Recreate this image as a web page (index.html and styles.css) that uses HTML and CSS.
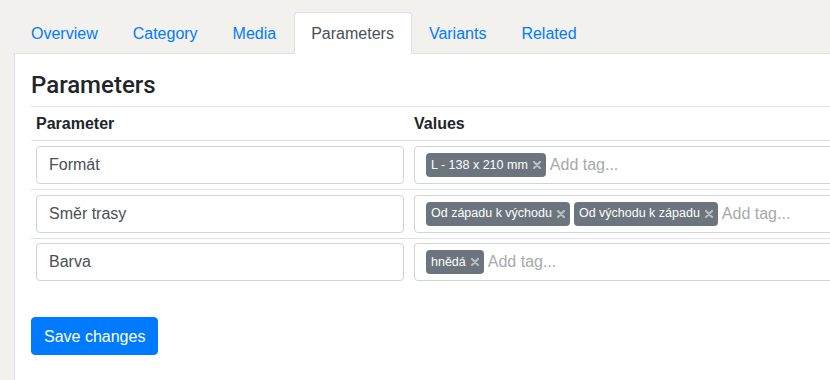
FILE: index.html
```html
<!DOCTYPE html>
<html lang="cs">
<head>
  <meta charset="UTF-8" />
  <meta name="viewport" content="width=device-width, initial-scale=1" />
  <title>Product parameters</title>
  <link rel="stylesheet" href="styles.css">
</head>
<body>

  <div class="page">
    <ul class="tabs">
      <li><a href="#">Overview</a></li>
      <li><a href="#">Category</a></li>
      <li><a href="#">Media</a></li>
      <li><a href="#" class="active">Parameters</a></li>
      <li><a href="#">Variants</a></li>
      <li><a href="#">Related</a></li>
    </ul>

    <div class="panel">
      <h4 class="panel-title">Parameters</h4>

      <table class="params">
        <thead>
          <tr>
            <th class="col-name">Parameter</th>
            <th>Values</th>
          </tr>
        </thead>
        <tbody>
          <tr>
            <td><input type="text" class="form-control" value="Formát"></td>
            <td>
              <div class="tag-input">
                <span class="tag">L - 138 x 210 mm <svg class="tag-remove" viewBox="0 0 8 8"><path d="M1 1L7 7M7 1L1 7"/></svg></span>
                <input type="text" class="tag-new" placeholder="Add tag...">
              </div>
            </td>
          </tr>
          <tr>
            <td><input type="text" class="form-control" value="Směr trasy"></td>
            <td>
              <div class="tag-input">
                <span class="tag">Od západu k východu <svg class="tag-remove" viewBox="0 0 8 8"><path d="M1 1L7 7M7 1L1 7"/></svg></span>
                <span class="tag">Od východu k západu <svg class="tag-remove" viewBox="0 0 8 8"><path d="M1 1L7 7M7 1L1 7"/></svg></span>
                <input type="text" class="tag-new" placeholder="Add tag...">
              </div>
            </td>
          </tr>
          <tr>
            <td><input type="text" class="form-control" value="Barva"></td>
            <td>
              <div class="tag-input">
                <span class="tag">hnědá <svg class="tag-remove" viewBox="0 0 8 8"><path d="M1 1L7 7M7 1L1 7"/></svg></span>
                <input type="text" class="tag-new" placeholder="Add tag...">
              </div>
            </td>
          </tr>
        </tbody>
      </table>

      <div class="actions">
        <button type="button" class="btn-save">Save changes</button>
      </div>
    </div>
  </div>

</body>
</html>
```

FILE: styles.css
```css
:root {
  --primary: #007bff;
  --border: #dee2e6;
  --input-border: #ced4da;
  --text: #212529;
  --text-muted: #495057;
  --badge: #6c757d;
  --bg-page: #f2f1ee;
}

html, body {
  height: 100%;
}

body {
  margin: 0;
  background-color: var(--bg-page);
  color: var(--text);
  font-family: "Liberation Sans", Arial, sans-serif;
  font-size: 16px;
  line-height: 1.5;
  overflow: hidden;
}

.page {
  width: 1100px;
  min-height: 100%;
  padding: 12px 0 0 14px;
  display: flex;
  flex-direction: column;
  box-sizing: border-box;
}

.tabs {
  display: flex;
  list-style: none;
  margin: 0;
  padding: 0;
  border-bottom: 1px solid var(--border);
}

.tabs li {
  margin-bottom: -1px;
}

.tabs a {
  display: block;
  padding: 9px 17px 7px 16px;
  border: 1px solid transparent;
  border-radius: 4px 4px 0 0;
  color: var(--primary);
  text-decoration: none;
}

.tabs a.active {
  background-color: #fff;
  border-color: var(--border) var(--border) #fff;
  color: var(--text-muted);
}

.panel {
  flex: 1;
  background-color: #fff;
  border-left: 1px solid var(--border);
  padding: 17px 16px 16px;
}

.panel-title {
  margin: 0 0 6px;
  font-family: Roboto, "Liberation Sans", Arial, sans-serif;
  font-size: 24px;
  font-weight: 500;
  line-height: 1.2;
}

.params {
  width: 100%;
  border-collapse: collapse;
}

.params th,
.params td {
  padding: 4.8px 5px;
  border-top: 1px solid var(--border);
  text-align: left;
  vertical-align: top;
}

.params th {
  font-weight: 700;
  padding-top: 5.5px;
  padding-bottom: 4.1px;
}

.col-name {
  width: 368px;
}

.form-control {
  display: block;
  width: 100%;
  height: 38px;
  box-sizing: border-box;
  padding: 6px 12px;
  border: 1px solid var(--input-border);
  border-radius: 4px;
  font-family: inherit;
  font-size: 16px;
  color: var(--text-muted);
}

.tag-input {
  display: flex;
  align-items: center;
  gap: 4px;
  height: 38px;
  box-sizing: border-box;
  padding: 0 11px;
  border: 1px solid var(--input-border);
  border-radius: 4px;
}

.tag {
  display: inline-flex;
  align-items: center;
  height: 24px;
  padding: 0 5px;
  border-radius: 4px;
  background-color: var(--badge);
  color: #fff;
  font-size: 12.5px;
  white-space: nowrap;
}

.tag-remove {
  width: 8px;
  height: 8px;
  margin-left: 5px;
  stroke: #b9bdc1;
  stroke-width: 2.2;
  stroke-linecap: round;
}

.tag-new {
  flex: 1;
  min-width: 0;
  border: none;
  outline: none;
  padding: 0;
  font-family: inherit;
  font-size: 16px;
  color: var(--text-muted);
}

.tag-new::placeholder {
  color: #a6a9ad;
}

.actions {
  margin-top: 31px;
}

.btn-save {
  padding: 7px 12px 5px;
  border: 1px solid var(--primary);
  border-radius: 4px;
  background-color: var(--primary);
  color: #fff;
  font-family: inherit;
  font-size: 16px;
  line-height: 1.5;
  cursor: pointer;
}
```
